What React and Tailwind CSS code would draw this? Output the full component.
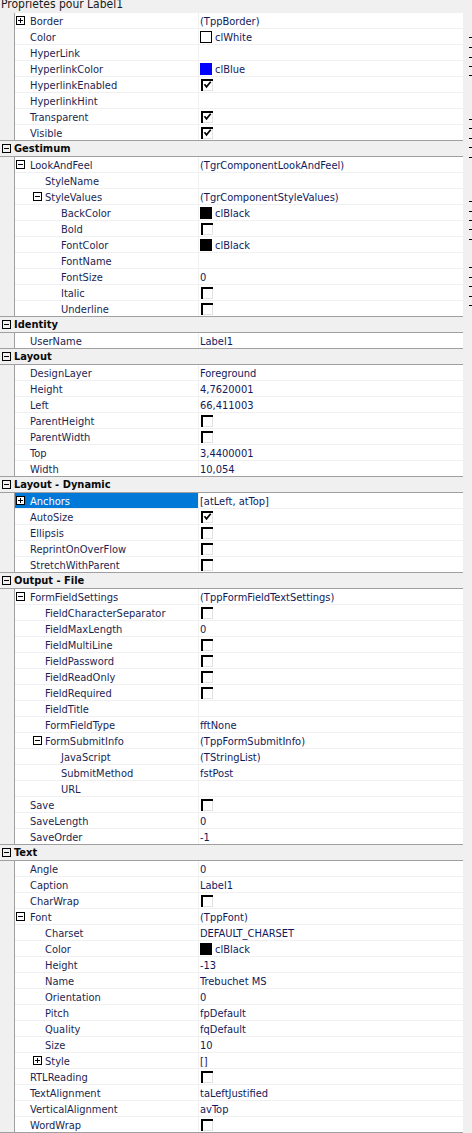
import React from 'react';

const rows = [
  { n: 'Border', box: '+', v: '(TppBorder)' },
  { n: 'Color', sw: 'white', v: 'clWhite' },
  { n: 'HyperLink' },
  { n: 'HyperlinkColor', sw: 'blue', v: 'clBlue' },
  { n: 'HyperlinkEnabled', cb: true },
  { n: 'HyperlinkHint' },
  { n: 'Transparent', cb: true },
  { n: 'Visible', cb: true },
  { cat: 'Gestimum' },
  { n: 'LookAndFeel', box: '-', v: '(TgrComponentLookAndFeel)' },
  { n: 'StyleName', l: 1 },
  { n: 'StyleValues', l: 1, box: '-', v: '(TgrComponentStyleValues)' },
  { n: 'BackColor', l: 2, sw: 'black', v: 'clBlack' },
  { n: 'Bold', l: 2, cb: false },
  { n: 'FontColor', l: 2, sw: 'black', v: 'clBlack' },
  { n: 'FontName', l: 2 },
  { n: 'FontSize', l: 2, v: '0' },
  { n: 'Italic', l: 2, cb: false },
  { n: 'Underline', l: 2, cb: false },
  { cat: 'Identity' },
  { n: 'UserName', v: 'Label1' },
  { cat: 'Layout' },
  { n: 'DesignLayer', v: 'Foreground' },
  { n: 'Height', v: '4,7620001' },
  { n: 'Left', v: '66,411003' },
  { n: 'ParentHeight', cb: false },
  { n: 'ParentWidth', cb: false },
  { n: 'Top', v: '3,4400001' },
  { n: 'Width', v: '10,054' },
  { cat: 'Layout - Dynamic' },
  { n: 'Anchors', box: '+', v: '[atLeft, atTop]', sel: true },
  { n: 'AutoSize', cb: true },
  { n: 'Ellipsis', cb: false },
  { n: 'ReprintOnOverFlow', cb: false },
  { n: 'StretchWithParent', cb: false },
  { cat: 'Output - File' },
  { n: 'FormFieldSettings', box: '-', v: '(TppFormFieldTextSettings)' },
  { n: 'FieldCharacterSeparator', l: 1, cb: false },
  { n: 'FieldMaxLength', l: 1, v: '0' },
  { n: 'FieldMultiLine', l: 1, cb: false },
  { n: 'FieldPassword', l: 1, cb: false },
  { n: 'FieldReadOnly', l: 1, cb: false },
  { n: 'FieldRequired', l: 1, cb: false },
  { n: 'FieldTitle', l: 1 },
  { n: 'FormFieldType', l: 1, v: 'fftNone' },
  { n: 'FormSubmitInfo', l: 1, box: '-', v: '(TppFormSubmitInfo)' },
  { n: 'JavaScript', l: 2, v: '(TStringList)' },
  { n: 'SubmitMethod', l: 2, v: 'fstPost' },
  { n: 'URL', l: 2 },
  { n: 'Save', cb: false },
  { n: 'SaveLength', v: '0' },
  { n: 'SaveOrder', v: '-1' },
  { cat: 'Text' },
  { n: 'Angle', v: '0' },
  { n: 'Caption', v: 'Label1' },
  { n: 'CharWrap', cb: false },
  { n: 'Font', box: '-', v: '(TppFont)' },
  { n: 'Charset', l: 1, v: 'DEFAULT_CHARSET' },
  { n: 'Color', l: 1, sw: 'black', v: 'clBlack' },
  { n: 'Height', l: 1, v: '-13' },
  { n: 'Name', l: 1, v: 'Trebuchet MS' },
  { n: 'Orientation', l: 1, v: '0' },
  { n: 'Pitch', l: 1, v: 'fpDefault' },
  { n: 'Quality', l: 1, v: 'fqDefault' },
  { n: 'Size', l: 1, v: '10' },
  { n: 'Style', l: 1, box: '+', v: '[]' },
  { n: 'RTLReading', cb: false },
  { n: 'TextAlignment', v: 'taLeftJustified' },
  { n: 'VerticalAlignment', v: 'avTop' },
  { n: 'WordWrap', cb: false },
];

const padNoBox = ['pl-[15px]', 'pl-[30px]', 'pl-[46px]'];
const padBox = ['pl-[1px]', 'pl-[18px]', 'pl-[34px]'];
const boxGap = ['mr-[5px]', 'mr-[3px]', 'mr-[3px]'];

const ticks = [
  'mt-[24px]', 'mt-[9px]', 'mt-[9px]', 'mt-[8px]', 'mt-[8px]',
  'mt-[43px]', 'mt-[8px]', 'mt-[9px]', 'mt-[8px]', 'mt-[9px]',
  'mt-[43px]', 'mt-[9px]', 'mt-[8px]', 'mt-[8px]', 'mt-[9px]',
  'mt-[27px]', 'mt-[9px]', 'mt-[8px]', 'mt-[9px]', 'mt-[8px]',
];

function Box({ plus, white, className = '' }) {
  return (
    <svg width="9" height="9" viewBox="0 0 9 9" className={'shrink-0 ' + className}>
      <rect x="0.5" y="0.5" width="8" height="8" fill={white ? '#ffffff' : 'none'} stroke="#000" />
      <path d="M2 4.5h5" stroke="#000" />
      {plus && <path d="M4.5 2v5" stroke="#000" />}
    </svg>
  );
}

function Check({ checked }) {
  return (
    <svg width="12" height="12" viewBox="0 0 12 12" className="ml-[1px] shrink-0">
      <path d="M0 0h12v2H2v10H0z" fill="#000" />
      <path d="M2 11.5h10M11.5 2v9.5" stroke="#e3e3e3" />
      {checked && <path d="M3.5 5.2l2 2.6 4.2-5" stroke="#000" strokeWidth="1.7" fill="none" />}
    </svg>
  );
}

function Swatch({ c }) {
  if (c === 'white') return <span className="mr-[3px] h-[12px] w-[12px] shrink-0 border border-black bg-white" />;
  if (c === 'blue') return <span className="mr-[3px] h-[12px] w-[12px] shrink-0 bg-[#0000ff]" />;
  return <span className="mr-[3px] h-[12px] w-[12px] shrink-0 bg-black" />;
}

function Row({ r, darkBottom }) {
  if (r.cat) {
    return (
      <div className="flex h-4 items-center border-b border-[#a0a0a0] bg-[#f0f0f0] pl-[2px] font-bold text-[#0a0a0a]">
        <Box className="mr-[3px]" />
        <span>{r.cat}</span>
      </div>
    );
  }
  const l = r.l || 0;
  return (
    <div className="flex h-4">
      <div className={'w-[15px] shrink-0 border-r border-[#a0a0a0] bg-[#f0f0f0] ' + (darkBottom ? 'border-b' : '')} />
      <div className={'flex min-w-0 flex-1 border-b bg-white ' + (darkBottom ? 'border-[#a0a0a0]' : 'border-[#f0f0f0]')}>
        <div
          className={
            'flex w-[184px] shrink-0 items-center whitespace-nowrap border-r border-r-[#f0f0f0] ' +
            (r.box ? padBox[l] : padNoBox[l]) +
            (r.sel ? ' bg-[#0078d7] text-white' : ' text-[#1c1f52]')
          }
        >
          {r.box && <Box plus={r.box === '+'} white={r.sel} className={boxGap[l]} />}
          <span className="mt-[2px]">{r.n}</span>
        </div>
        <div className="flex min-w-0 flex-1 items-center whitespace-nowrap pl-[1px] text-[#101a5c]">
          {r.cb !== undefined && <Check checked={r.cb} />}
          {r.sw && <Swatch c={r.sw} />}
          {r.v && <span className="mt-[2px]">{r.v}</span>}
        </div>
      </div>
    </div>
  );
}

export default function App() {
  return (
    <div className="h-[1133px] w-[472px] overflow-hidden bg-[#f0f0f0] font-['DejaVu_Sans_Condensed','Liberation_Sans',sans-serif] text-[11px] leading-[15px]">
      <div className="h-[13px] overflow-hidden bg-[#f0f0f0]">
        <div className="-mt-[2px] pl-[1px] text-[12px] leading-[12px] text-[#1a1a1a]">Propriétés pour Label1</div>
      </div>
      <div className="flex">
        <div className="w-[463px] shrink-0">
          {rows.map((r, i) => (
            <Row
              key={i}
              r={r}
              darkBottom={i === rows.length - 1 || (rows[i + 1] && rows[i + 1].cat)}
            />
          ))}
        </div>
        <div className="flex w-[9px] shrink-0 flex-col items-end bg-[#f0f0f0]">
          {ticks.map((t, i) => (
            <div key={i} className={'h-px w-[3px] shrink-0 bg-black ' + t} />
          ))}
        </div>
      </div>
    </div>
  );
}
